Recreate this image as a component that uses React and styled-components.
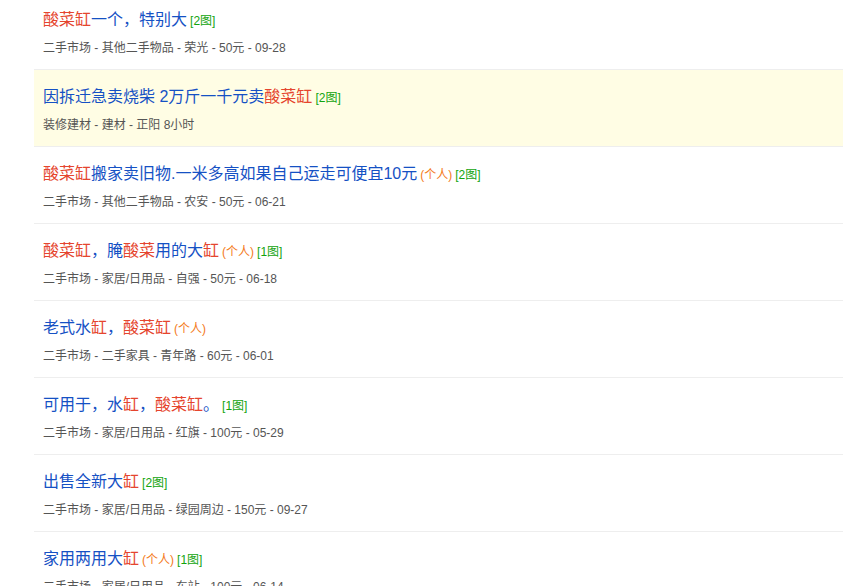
import React from "react"
import styled, { createGlobalStyle } from "styled-components"

const GlobalStyle = createGlobalStyle`
  body {
    margin: 0;
    background: #fff;
    font-family: "Liberation Sans", "Noto Sans CJK SC", Arial, sans-serif;
    overflow: hidden;
  }
`

const List = styled.ul`
  list-style: none;
  margin: -7px 0 0 34px;
  padding: 0;
`
const Row = styled.li`
  box-sizing: border-box;
  height: 77px;
  padding: 16px 9px 0;
  border-bottom: 1px solid #eeeeee;
  background: ${(p) => (p.$hot ? "#fffde4" : "#fff")};
`
const Title = styled.div`
  height: 22px;
  font-size: 16px;
  line-height: 22px;
  color: #1551c4;
  white-space: nowrap;
  overflow: hidden;
`
const Mark = styled.span`
  color: #e5452e;
`
const Personal = styled.span`
  font-size: 12px;
  color: #f47a20;
  margin-left: 3px;
`
const Pics = styled.span`
  font-size: 12px;
  color: #12a40e;
  margin-left: 3px;
`
const Meta = styled.div`
  height: 20px;
  margin-top: 7px;
  font-size: 12px;
  line-height: 20px;
  color: #555;
  white-space: nowrap;
`

const items = [
  { t: [["m", "酸菜缸"], ["", "一个，特别大"]], pics: 2, meta: "二手市场 - 其他二手物品 - 荣光 - 50元 - 09-28" },
  { t: [["", "因拆迁急卖烧柴 2万斤一千元卖"], ["m", "酸菜缸"]], pics: 2, meta: "装修建材 - 建材 - 正阳 8小时", hot: true },
  { t: [["m", "酸菜缸"], ["", "搬家卖旧物.一米多高如果自己运走可便宜10元"]], own: true, pics: 2, meta: "二手市场 - 其他二手物品 - 农安 - 50元 - 06-21" },
  { t: [["m", "酸菜缸"], ["", "，腌"], ["m", "酸菜"], ["", "用的大"], ["m", "缸"]], own: true, pics: 1, meta: "二手市场 - 家居/日用品 - 自强 - 50元 - 06-18" },
  { t: [["", "老式水"], ["m", "缸"], ["", "，"], ["m", "酸菜缸"]], own: true, meta: "二手市场 - 二手家具 - 青年路 - 60元 - 06-01" },
  { t: [["", "可用于，水"], ["m", "缸"], ["", "，"], ["m", "酸菜缸"], ["", "。"]], pics: 1, meta: "二手市场 - 家居/日用品 - 红旗 - 100元 - 05-29" },
  { t: [["", "出售全新大"], ["m", "缸"]], pics: 2, meta: "二手市场 - 家居/日用品 - 绿园周边 - 150元 - 09-27" },
  { t: [["", "家用两用大"], ["m", "缸"]], own: true, pics: 1, meta: "二手市场 - 家居/日用品 - 东站 - 100元 - 06-14" },
]

const App = () => (
  <>
    <GlobalStyle />
    <List>
      {items.map((it, i) => (
        <Row key={i} $hot={it.hot}>
          <Title>
            {it.t.map(([k, s], j) => (k === "m" ? <Mark key={j}>{s}</Mark> : <span key={j}>{s}</span>))}
            {it.own && <Personal>(个人)</Personal>}
            {it.pics && <Pics>[{it.pics}图]</Pics>}
          </Title>
          <Meta>{it.meta}</Meta>
        </Row>
      ))}
    </List>
  </>
)

export default App
